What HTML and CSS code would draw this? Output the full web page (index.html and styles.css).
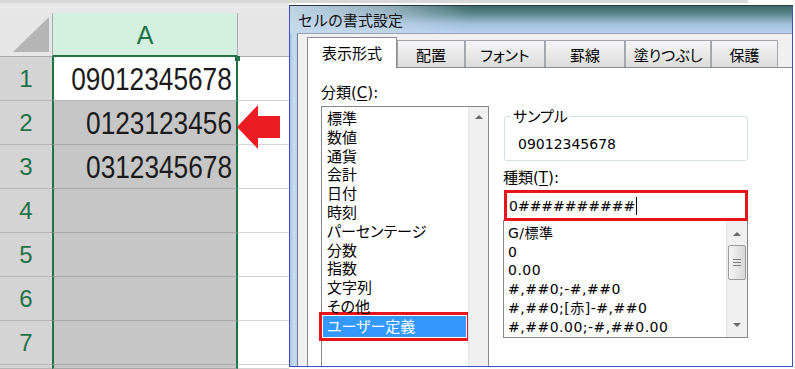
FILE: index.html
```html
<!DOCTYPE html>
<html lang="ja">
<head>
<meta charset="utf-8">
<title>セルの書式設定</title>
<link rel="stylesheet" href="styles.css">
</head>
<body>
<div class="screen">
  <div class="sheet">
    <div class="topstrip"></div>
    <div class="grid">
      <div class="corner"><svg width="52" height="43" viewBox="0 0 52 43"><polygon points="13,39 49,39 49,4" fill="#b5b5b5"/></svg></div>
      <div class="colhead sel">A</div>
      <div class="colhead"></div>

      <div class="rh">1</div><div class="ca active"><span class="num">09012345678</span></div><div class="cb"></div>
      <div class="rh">2</div><div class="ca"><span class="num">0123123456</span></div><div class="cb"></div>
      <div class="rh">3</div><div class="ca"><span class="num">0312345678</span></div><div class="cb"></div>
      <div class="rh">4</div><div class="ca"></div><div class="cb"></div>
      <div class="rh">5</div><div class="ca"></div><div class="cb"></div>
      <div class="rh">6</div><div class="ca"></div><div class="cb"></div>
      <div class="rh">7</div><div class="ca"></div><div class="cb"></div>
      <div class="rh"></div><div class="ca"></div><div class="cb"></div>
    </div>
    <svg class="arrow" width="43" height="44" viewBox="0 0 43 44"><polygon points="0,22 21,0 21,11 43,11 43,33 21,33 21,44" fill="#ed1c24"/></svg>
  </div>

  <div class="dialog">
    <div class="titlebar">セルの書式設定</div>
    <div class="dlg-body">
      <div class="frame"></div>
      <div class="client">
        <div class="tabs">
          <div class="tab active">表示形式</div>
          <div class="tab t68">配置</div>
          <div class="tab t80">フォント</div>
          <div class="tab t80">罫線</div>
          <div class="tab t86">塗りつぶし</div>
          <div class="tab t67">保護</div>
        </div>
        <div class="panel">
          <div class="col-left">
            <div class="label">分類(<u>C</u>):</div>
            <div class="listbox cat">
              <div class="items">
                <div class="item">標準</div>
                <div class="item">数値</div>
                <div class="item">通貨</div>
                <div class="item">会計</div>
                <div class="item">日付</div>
                <div class="item">時刻</div>
                <div class="item">パーセンテージ</div>
                <div class="item">分数</div>
                <div class="item">指数</div>
                <div class="item">文字列</div>
                <div class="item">その他</div>
                <div class="item sel">ユーザー定義</div>
              </div>
              <div class="vs">
                <div class="btn up"><span class="tri-up"></span></div>
              </div>
            </div>
          </div>
          <div class="col-right">
            <fieldset class="sample">
              <legend>サンプル</legend>
              <div class="sample-text">09012345678</div>
            </fieldset>
            <div class="label type-label">種類(<u>T</u>):</div>
            <div class="type-input">0##########<span class="caret"></span></div>
            <div class="listbox fmt">
              <div class="items">
                <div class="item">G/標準</div>
                <div class="item">0</div>
                <div class="item">0.00</div>
                <div class="item">#,##0;-#,##0</div>
                <div class="item">#,##0;[赤]-#,##0</div>
                <div class="item">#,##0.00;-#,##0.00</div>
              </div>
              <div class="vs">
                <div class="btn up tall"><span class="tri-up"></span></div>
                <div class="thumb"><span class="grip"></span></div>
                <div class="track"></div>
                <div class="btn down tall"><span class="tri-down"></span></div>
              </div>
            </div>
          </div>
        </div>
      </div>
    </div>
  </div>
</div>
</body>
</html>
```

FILE: styles.css
```css
* { box-sizing: border-box; margin: 0; padding: 0; }

body {
  margin: 0;
  width: 795px;
  height: 369px;
  overflow: hidden;
  background: #fff;
}

.screen {
  display: flex;
  width: 795px;
  height: 369px;
  background: linear-gradient(#d8d8d8, #d8d8d8) no-repeat 0 0 / 748px 3px, #fff;
}

/* ---------- spreadsheet ---------- */
.sheet {
  position: relative;
  width: 289px;
  flex: none;
  display: flex;
  flex-direction: column;
  font-family: "Liberation Sans", Arial, sans-serif;
}

.topstrip {
  height: 13px;
  background: #e8e8e8;
  border-top: 3px solid #d8d8d8;
}

.grid {
  flex: 1;
  display: grid;
  grid-template-columns: 52px 186px 51px;
  grid-template-rows: 44px repeat(7, 44px) 1fr;
}

.corner {
  background: #e6e6e6;
  border-bottom: 1px solid #ababab;
}
.corner svg { display: block; }

.colhead {
  background: #e6e6e6;
  border-bottom: 1px solid #ababab;
}
.colhead.sel {
  background: #d3f0e0;
  color: #217346;
  border-left: 1px solid #ababab;
  border-right: 1px solid #ababab;
  border-bottom: 2px solid #217346;
  font-size: 25px;
  display: flex;
  align-items: center;
  justify-content: center;
  padding-top: 2px;
}

.rh {
  background: #d4d4d4;
  color: #217346;
  border-bottom: 1px solid #b4b4b4;
  font-size: 24px;
  display: flex;
  align-items: center;
  justify-content: center;
}

.ca {
  position: relative;
  background: #c6c6c6;
  border-left: 2px solid #217346;
  border-right: 2px solid #217346;
  border-bottom: 1px solid #a6a6a6;
  display: flex;
  align-items: center;
  justify-content: flex-end;
  padding-right: 4px;
}
.ca.active {
  background: #fff;
  border-bottom-color: #b4b4b4;
}
.ca.active::after {
  content: "";
  position: absolute;
  top: -1px;
  right: -4px;
  width: 5px;
  height: 5px;
  background: #217346;
}

.cb {
  background: #fff;
  border-bottom: 1px solid #d4d4d4;
}

.num {
  display: inline-block;
  font-size: 32px;
  line-height: 1;
  color: #1a1a1a;
  transform: scaleX(0.82);
  transform-origin: right center;
  white-space: nowrap;
}

.arrow {
  position: absolute;
  left: 237px;
  top: 105px;
}

/* ---------- dialog ---------- */
.dialog {
  width: 504px;
  height: 362px;
  margin-top: 5px;
  flex: none;
  border: 1px solid #3f4fc6;
  border-top-color: #2e3a44;
  display: flex;
  flex-direction: column;
  overflow: hidden;
  font-family: "DejaVu Sans", "Noto Sans CJK JP", sans-serif;
  color: #000;
}

.titlebar {
  height: 27px;
  flex: none;
  padding-left: 8px;
  font: 15px/27px "Noto Sans CJK JP", sans-serif;
  color: #111;
  background:
    linear-gradient(90deg, rgba(198, 216, 236, 0.95) 0px, rgba(198, 216, 236, 0.6) 100px, rgba(198, 216, 236, 0) 180px),
    linear-gradient(180deg, #3b6868 0%, #5d888c 30%, #9dbcd8 65%, #b9d3ee 100%);
}

.dlg-body {
  flex: 1;
  min-height: 0;
  display: flex;
}

.frame {
  width: 7px;
  flex: none;
  background: linear-gradient(90deg, #a9c4e2, #c8dcf1 55%, #bcd2ec);
}

.client {
  flex: 1;
  min-width: 0;
  display: flex;
  flex-direction: column;
  background: #f0f0f0;
  border-left: 1px solid #6f8196;
  border-top: 1px solid #95a5b7;
  padding: 3px 0 0 9px;
}

.tabs {
  display: flex;
  align-items: flex-end;
  height: 30px;
  flex: none;
  position: relative;
  z-index: 1;
  font: 15px/1 "Noto Sans CJK JP", sans-serif;
  font-feature-settings: "palt";
}

.tab {
  height: 27px;
  border: 1px solid #a3a6ad;
  border-bottom: none;
  background: linear-gradient(#f6f6f6, #e9e9e9 50%, #dcdcdc);
  display: flex;
  align-items: center;
  justify-content: center;
  padding-top: 1px;
}
.tab.active {
  width: 90px;
  height: 31px;
  margin-bottom: -1px;
  background: #fff;
  border-color: #898c95;
  padding-top: 0;
  padding-bottom: 1px;
}
.t68 { width: 68px; }
.t80 { width: 80px; }
.t86 { width: 86px; }
.t67 { width: 67px; }

.panel {
  flex: 1;
  min-height: 0;
  display: flex;
  gap: 14px;
  background: #fff;
  border-top: 1px solid #898c95;
  border-left: 1px solid #898c95;
  padding: 15px 0 0 13px;
  overflow: hidden;
}

.label {
  font-size: 15px;
  line-height: 20px;
  height: 20px;
  white-space: nowrap;
}
.label u { text-underline-offset: 2px; }

.col-left {
  width: 168px;
  flex: none;
  display: flex;
  flex-direction: column;
  gap: 3px;
}

.listbox {
  display: flex;
  border: 1px solid #828790;
  background: #fff;
  flex: none;
}

.cat { height: 290px; }
.cat .items {
  flex: 1;
  padding-top: 2px;
  font: 15px/18.8px "Noto Sans CJK JP", sans-serif;
  font-feature-settings: "palt";
}
.cat .item {
  padding-left: 5px;
  white-space: nowrap;
}
.cat .item.sel {
  margin: 0 2px 0 1px;
  padding-left: 4px;
  height: 21px;
  line-height: 20px;
  background: #3399ff;
  color: #fff;
  box-shadow: 0 0 0 1px #fff, 0 0 0 4px #e8141c;
}

.vs {
  width: 20px;
  flex: none;
  display: flex;
  flex-direction: column;
  background: #f0f0f0;
  border-left: 1px solid #e4e4e4;
}
.fmt .vs { width: 21px; }

.btn {
  height: 18px;
  flex: none;
  display: flex;
  justify-content: center;
  align-items: center;
  padding-top: 2px;
}
.btn.tall { height: 24px; }
.btn.down { padding-top: 0; padding-bottom: 0; }

.tri-up {
  width: 0;
  height: 0;
  border-left: 4px solid transparent;
  border-right: 4px solid transparent;
  border-bottom: 4px solid #6a6a6a;
}
.tri-down {
  width: 0;
  height: 0;
  border-left: 4px solid transparent;
  border-right: 4px solid transparent;
  border-top: 4px solid #6a6a6a;
}

.thumb {
  height: 35px;
  flex: none;
  margin: 0 1px;
  border: 1px solid #9c9c9c;
  border-radius: 2px;
  background: linear-gradient(90deg, #f6f6f6, #e6e6e6 50%, #d6d6d6);
  display: flex;
  align-items: center;
  justify-content: center;
}
.grip {
  width: 8px;
  height: 7px;
  background: repeating-linear-gradient(180deg, #7d7d7d 0 1px, transparent 1px 3px);
}
.track { flex: 1; }

.col-right {
  width: 245px;
  flex: none;
  display: flex;
  flex-direction: column;
  padding-top: 23px;
}

.sample {
  margin: 0 0 0 1px;
  width: 244px;
  border: 1px solid #d5dfe5;
  border-radius: 3px;
  padding: 0 0 6px 13px;
}
.sample legend {
  margin-left: -7px;
  padding: 0 2px;
  font: 15px/20px "Noto Sans CJK JP", sans-serif;
  font-feature-settings: "palt";
}
.sample-text {
  margin-top: 8px;
  font-size: 14px;
  line-height: 20px;
}

.type-label { margin-top: 7px; }

.type-input {
  position: relative;
  z-index: 1;
  margin: 2px 0 0 1px;
  width: 244px;
  height: 31px;
  flex: none;
  border: 3px solid #e8141c;
  background: #fff;
  padding-left: 2px;
  display: flex;
  align-items: center;
  font-size: 14px;
  white-space: nowrap;
}
.caret {
  width: 1px;
  height: 18px;
  background: #000;
  margin-left: 1px;
}

.fmt {
  height: 118px;
  margin-top: -1px;
}
.fmt .items {
  flex: 1;
  padding: 3px 0 0 4px;
  font-size: 14px;
  line-height: 18.7px;
  letter-spacing: 0.5px;
  white-space: nowrap;
  overflow: hidden;
}
```
